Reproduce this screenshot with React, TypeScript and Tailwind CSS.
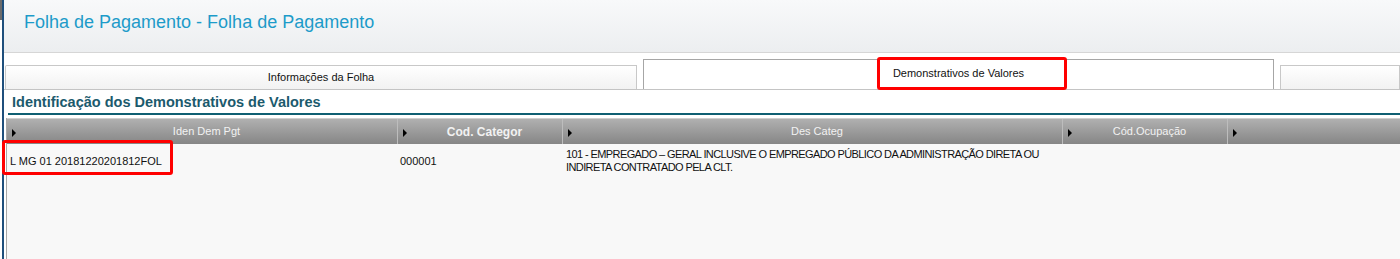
import React from 'react'

const Arrow: React.FC = () => (
  <span className="ml-[5px] mt-[2px] w-0 h-0 border-y-[4px] border-y-transparent border-l-[4px] border-l-black shrink-0" />
)

const HeadCell: React.FC<{ label?: string; w: string; bold?: boolean; first?: boolean }> = ({ label, w, bold, first }) => (
  <div className={`${w} h-full flex items-center ${first ? '' : 'border-l border-[#bdbdbd]'}`}>
    <Arrow />
    <span
      className={`flex-1 text-center text-[#f2f2f2] ${bold ? 'text-[12px] font-bold' : 'text-[11px]'}`}
    >
      {label}
    </span>
  </div>
)

export default function App() {
  return (
    <div className="w-[1400px] h-[259px] overflow-hidden bg-white flex font-['Liberation_Sans',Arial,sans-serif]">
      {/* left edge */}
      <div className="w-[2px] flex flex-col">
        <div className="h-[20px] bg-[#6b6b6b]" />
      </div>
      <div className="w-[2px] bg-[#1f4f7c]" />

      <div className="flex-1 flex flex-col">
        {/* page header */}
        <div className="h-[53px] bg-gradient-to-b from-[#f8f9fa] to-[#eceef0] border-b border-[#d6d6d6] pl-[20px] pt-[11px]">
          <h1 className="text-[18px] text-[#1d9bc9] leading-[22px]">Folha de Pagamento - Folha de Pagamento</h1>
        </div>

        {/* tabs */}
        <div className="h-[37px] flex items-end border-b border-[#c4c4c4]">
          <div className="ml-[1px] w-[632px] h-[24px] border border-b-0 border-[#c8c8c8] rounded-tl-[2px] bg-gradient-to-b from-white to-[#f2f2f2] flex items-center justify-center text-[11px] text-[#111]">
            Informações da Folha
          </div>
          <div className="relative ml-[6px] w-[631px] h-[30px] border border-b-0 border-[#a6a6a6] bg-white flex items-center justify-center pb-[2px] text-[11px] text-[#111]">
            Demonstrativos de Valores
            <div className="absolute left-[233px] top-[-3px] w-[190px] h-[33px] border-[3px] border-[#ff0000] rounded-[3px]" />
          </div>
          <div className="ml-[6px] flex-1 h-[24px] border border-b-0 border-[#c8c8c8] bg-gradient-to-b from-white to-[#f2f2f2]" />
        </div>

        {/* section title */}
        <div className="ml-[4px] h-[25px] border-b-2 border-[#0f5f72] pl-[4px] pt-[2px] flex items-center">
          <h2 className="text-[14.5px] font-bold text-[#1b5a6d]">
            Identificação dos Demonstrativos de Valores
          </h2>
        </div>

        {/* grid */}
        <div className="mt-[3px] ml-[2px] flex-1 border-l border-[#a8a8a8] flex flex-col bg-[#f8f8f8]">
          <div className="h-[26px] border-t border-[#cfcfcf] bg-gradient-to-b from-[#b0b0b0] to-[#868686] flex">
            <HeadCell first w="w-[390px]" label="Iden Dem Pgt" />
            <HeadCell w="w-[165px]" label="Cod. Categor" bold />
            <HeadCell w="w-[500px]" label="Des Categ" />
            <HeadCell w="w-[165px]" label="Cód.Ocupação" />
            <HeadCell w="flex-1" />
          </div>

          <div className="h-[34px] flex items-center text-[11px] text-[#111] leading-[13px]">
            <div className="relative w-[390px] pl-[3px]">
              L MG 01 20181220201812FOL
              <div className="absolute left-[-5px] top-[-15px] w-[171px] h-[35px] border-[3px] border-[#ff0000] rounded-[3px]" />
            </div>
            <div className="w-[165px] pl-[3px]">000001</div>
            <div className="w-[500px] pl-[4px] whitespace-nowrap tracking-[-0.6px]">
              101 - EMPREGADO – GERAL INCLUSIVE O EMPREGADO PÚBLICO DA ADMINISTRAÇÃO DIRETA OU
              <br />
              INDIRETA CONTRATADO PELA CLT.
            </div>
            <div className="w-[165px]" />
            <div className="flex-1" />
          </div>
        </div>
      </div>
    </div>
  )
}
